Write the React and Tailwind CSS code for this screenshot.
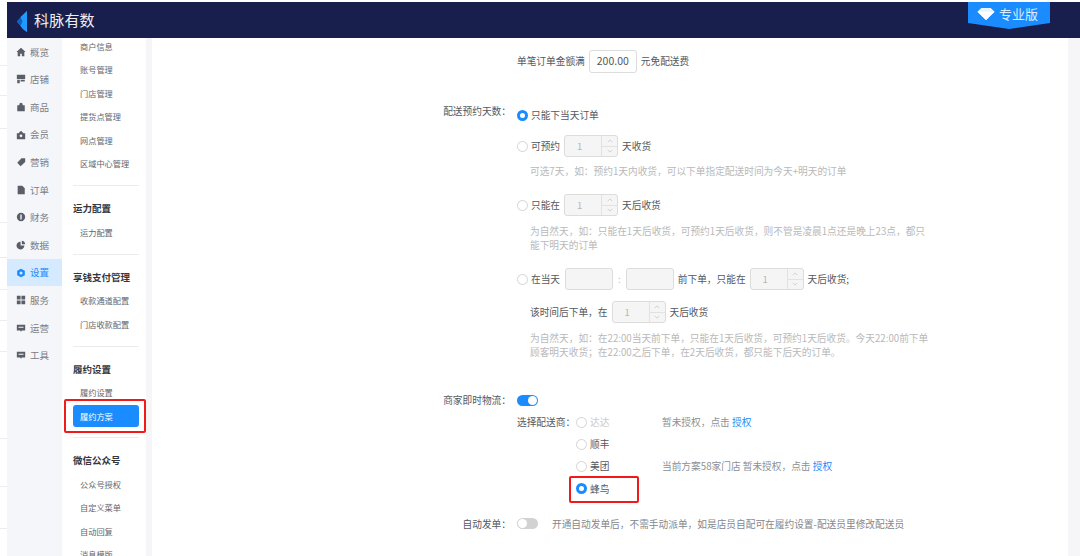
const CJK = "font-['Noto_Sans_CJK_SC','Noto_Sans',sans-serif]"

const menu = [
  ['概览', 'home'], ['店铺', 'store'], ['商品', 'bag'], ['会员', 'crown'], ['营销', 'tag'], ['订单', 'doc'],
  ['财务', 'coin'], ['数据', 'pie'], ['设置', 'gear'], ['服务', 'grid'], ['运营', 'msg'], ['工具', 'msg'],
]

function MenuIcon({ name }) {
  const paths = {
    home: 'M6 1 L11.5 6 H10 V11 H7 V8 H5 V11 H2 V6 H.5 Z',
    store: 'M1 1 H11 V6 H1 Z M1.5 7 H4.5 V11 H1.5 Z M5.5 7 H10.5 V9 H5.5 Z',
    bag: 'M4 4 V3 A2 2 0 0 1 8 3 V4 H10.5 V11 H1.5 V4 Z',
    crown: 'M1 4 H3 L6 1 L9 4 H11 V11 H1 Z',
    tag: 'M6.5 1.5 H11 V6 L5.5 11 L1.5 7 Z',
    doc: 'M2 1 H7.5 L10.5 4 V11 H2 Z',
    coin: 'M6 1 A5 5 0 1 1 6 11 A5 5 0 1 1 6 1 Z',
    pie: 'M5.5 2 V6.5 H10 A4.7 4.7 0 1 1 5.5 2 Z M7 1 A4.5 4.5 0 0 1 11 5 H7 Z',
    gear: 'M6 .8 L10.6 3.4 V8.6 L6 11.2 L1.4 8.6 V3.4 Z',
    grid: 'M1 1 H5.5 V5.5 H1 Z M6.5 1 H11 V5.5 H6.5 Z M1 6.5 H5.5 V11 H1 Z M6.5 6.5 H11 V11 H6.5 Z',
    msg: 'M1 2 H11 V9 H7 L6 10.5 L5 9 H1 Z',
  }
  return (
    <svg viewBox="0 0 12 12" className="w-[10px] h-[10px] shrink-0" fill="currentColor">
      <path d={paths[name]} />
      {name === 'gear' && <circle cx="6" cy="6" r="1.8" fill="#d5e9ff" />}
      {name === 'coin' && <rect x="5.2" y="3" width="1.6" height="6" fill="#f5f6fa" />}
      {name === 'msg' && <rect x="3" y="4.5" width="6" height="1.2" fill="#f5f6fa" />}
      {name === 'crown' && <circle cx="6" cy="7" r="1.6" fill="#f5f6fa" />}
    </svg>
  )
}

function SubItem({ children }) {
  return <div className="h-[23.5px] flex items-center pl-[7px] text-[8.2px] text-[#62656b]">{children}</div>
}

function SubTitle({ children }) {
  return <div className="h-[24px] flex items-center text-[9.5px] font-bold text-[#33363c]">{children}</div>
}

function Divider() {
  return <div className="border-t border-[#ececec] mt-[10px] mb-[10px]" />
}

function Radio({ checked }) {
  if (checked) return <span className="w-[11px] h-[11px] rounded-full border-[3px] border-[#1a8cff] bg-white shrink-0" />
  return <span className="w-[11px] h-[11px] rounded-full border border-[#d4d4d4] bg-white shrink-0" />
}

function Stepper() {
  return (
    <div className="w-[54px] h-[22px] flex border border-[#dcdcdc] rounded-[3px] bg-[#f5f5f5] text-[9.5px] text-[#b5b5b5]">
      <div className="flex-1 flex items-center pl-[12px]">1</div>
      <div className="w-[16px] border-l border-[#e2e2e2] flex flex-col text-[#c4c4c4]">
        <div className="flex-1 flex items-center justify-center border-b border-[#e2e2e2]">
          <svg viewBox="0 0 8 5" className="w-[6px] h-[4px]" fill="none" stroke="currentColor"><path d="M1 4 L4 1 L7 4" /></svg>
        </div>
        <div className="flex-1 flex items-center justify-center">
          <svg viewBox="0 0 8 5" className="w-[6px] h-[4px]" fill="none" stroke="currentColor"><path d="M1 1 L4 4 L7 1" /></svg>
        </div>
      </div>
    </div>
  )
}

function Blank() {
  return <div className="w-[48px] h-[22px] border border-[#dcdcdc] rounded-[3px] bg-[#f5f5f5]" />
}

function Help({ children, className = '' }) {
  return <p className={`pl-[13px] w-[415px] text-[9.7px] leading-[14px] text-[#b9b9b9] ${className}`}>{children}</p>
}

export default function App() {
  return (
    <div className={`${CJK} w-[1080px] h-[556px] overflow-hidden flex bg-white`}>
      {/* page behind the window */}
      <div className="w-[7px] pt-[37px] flex flex-col shrink-0">
        {[29, 30, 33, 94, 35, 32, 31, 31, 87, 48, 42].map((h, i) => (
          <div key={i} style={{ height: h }} className="border-b border-[#ececec]" />
        ))}
      </div>

      <div className="flex-1 flex flex-col pt-[2px] min-w-0">
        {/* header */}
        <header className="h-[36px] bg-[#181f4d] flex justify-between shrink-0 pl-[10px] pr-[30px]">
          <div className="flex items-center gap-[7px]">
            <svg viewBox="0 0 10 21" className="w-[10px] h-[21px] mt-[3px]">
              <path d="M10 0 V21 L6 18 L0 10.5 Z" fill="#1a8cff" />
              <path d="M10 0 L3.5 6 L5.5 10.5 L3.5 15 L6 18 L10 21 Z" fill="#1f9bff" />
              <path d="M0 10.5 L3.5 6 L5.5 10.5 L3.5 15 Z" fill="#0f62c4" />
            </svg>
            <span className="text-[15px] tracking-[0.2px] text-[#eef0f6] mt-[1px]">科脉有数</span>
          </div>
          <div className="w-[82px] h-[27px] bg-[#1a8cff] flex items-start pl-[9px] gap-[4px] pt-[3px] [clip-path:polygon(0_0,100%_0,100%_78%,50%_100%,0_78%)]">
            <svg viewBox="0 0 20 14" className="w-[18px] h-[12px] mt-[3px]">
              <path d="M4.5 0 H15.5 L20 4.5 L10 14 L0 4.5 Z" fill="#e8f4ff" />
              <path d="M0 4.5 H20 L10 14 Z" fill="#ffffff" />
            </svg>
            <span className="text-[13px] leading-[18px] text-[#dcecff]">专业版</span>
          </div>
        </header>

        <div className="flex-1 flex min-h-0">
          {/* main menu */}
          <nav className="w-[55px] bg-[#f5f6fa] shrink-0">
            {menu.map(([label, icon]) => {
              const active = label === '设置'
              return (
                <div
                  key={label}
                  className={`h-[27.6px] flex items-center gap-[4px] pl-[9px] text-[9.5px] ${active ? 'bg-[#d5e9ff] text-[#1a8cff]' : 'text-[#7a7d84]'}`}
                >
                  <span className={active ? 'text-[#1a8cff]' : 'text-[#5b5e66]'}><MenuIcon name={icon} /></span>
                  {label}
                </div>
              )
            })}
          </nav>

          {/* sub menu */}
          <aside className="w-[84px] shrink-0 bg-white overflow-hidden">
            <div className="pl-[11px] pr-[7px] -mt-[3.75px]">
              <SubItem>商户信息</SubItem>
              <SubItem>账号管理</SubItem>
              <SubItem>门店管理</SubItem>
              <SubItem>提货点管理</SubItem>
              <SubItem>网点管理</SubItem>
              <SubItem>区域中心管理</SubItem>
              <Divider />
              <SubTitle>运力配置</SubTitle>
              <SubItem>运力配置</SubItem>
              <Divider />
              <SubTitle>享钱支付管理</SubTitle>
              <SubItem>收款通道配置</SubItem>
              <SubItem>门店收款配置</SubItem>
              <Divider />
              <SubTitle>履约设置</SubTitle>
              <SubItem>履约设置</SubItem>
              <div className="relative h-[22px] mt-[1px] mb-[2px] bg-[#1a8cff] rounded-[3px] flex items-center pl-[7px] text-[8.2px] text-white">
                履约方案
                <span className="absolute -left-[9px] -right-[7px] -inset-y-[6px] border-2 border-[#f01a1a] rounded-[2px]" />
              </div>
              <Divider />
              <SubTitle>微信公众号</SubTitle>
              <SubItem>公众号授权</SubItem>
              <SubItem>自定义菜单</SubItem>
              <SubItem>自动回复</SubItem>
              <SubItem>消息模版</SubItem>
            </div>
          </aside>

          {/* content */}
          <div className="flex-1 flex bg-[#f6f6f8] pl-[6px] pr-[12px] min-w-0">
            <main className="flex-1 bg-white text-[9.7px] text-[#55585d] pt-[11px]">
              <div className="flex items-center gap-[4px] pl-[365px] h-[24px]">
                单笔订单金额满
                <span className="w-[48px] h-[23px] border border-[#dcdcdc] rounded-[3px] flex items-center justify-center text-[10.5px] text-[#55585c]">200.00</span>
                元免配送费
              </div>

              <div className="flex mt-[33px]">
                <div className="w-[359px] text-right leading-[14px] -mt-[2px]">配送预约天数：</div>
                <div className="ml-[6px] flex flex-col">
                  <div className="flex items-center gap-[4px] h-[16px] mt-[1px]">
                    <Radio checked /><span className="-ml-[1px]">只能下当天订单</span>
                  </div>
                  <div className="flex items-center gap-[4px] mt-[12px]">
                    <Radio /><span className="-ml-[1px]">可预约</span><Stepper />天收货
                  </div>
                  <Help className="mt-[7px]">可选7天，如：预约1天内收货，可以下单指定配送时间为今天+明天的订单</Help>
                  <div className="flex items-center gap-[4px] mt-[16px]">
                    <Radio /><span className="-ml-[1px]">只能在</span><Stepper />天后收货
                  </div>
                  <Help className="mt-[8px]">为自然天，如：只能在1天后收货，可预约1天后收货，则不管是凌晨1点还是晚上23点，都只能下明天的订单</Help>
                  <div className="flex items-center gap-[4px] mt-[16px]">
                    <Radio /><span className="-ml-[1px]">在当天</span>
                    <span className="ml-[1px]"><Blank /></span>
                    <span className="mx-[1px] text-[#b5b5b5]">:</span>
                    <Blank />
                    前下单，只能在<Stepper />天后收货;
                  </div>
                  <div className="flex items-center gap-[4px] mt-[11px] pl-[13px]">
                    该时间后下单，在<Stepper />天后收货
                  </div>
                  <Help className="mt-[8px]">为自然天，如：在22:00当天前下单，只能在1天后收货，可预约1天后收货。今天22:00前下单顾客明天收货；在22:00之后下单，在2天后收货，都只能下后天的订单。</Help>
                </div>
              </div>

              <div className="flex items-center mt-[34px] h-[14px]">
                <div className="w-[359px] text-right">商家即时物流：</div>
                <div className="ml-[6px] w-[21px] h-[11px] rounded-full bg-[#1a8cff] flex justify-end items-center pr-[1px]">
                  <span className="w-[9px] h-[9px] rounded-full bg-white" />
                </div>
              </div>

              <div className="flex mt-[7px] pl-[365px]">
                <div className="w-[59px] leading-[16px] shrink-0">选择配送商：</div>
                <div className="flex flex-col gap-[6.3px]">
                  <div className="flex items-center h-[16px]">
                    <Radio /><span className="ml-[3px] w-[72px] text-[#c8c8c8]">达达</span>
                    <span className="text-[#8d8f94]">暂未授权，点击 <span className="text-[#1a8cff]">授权</span></span>
                  </div>
                  <div className="flex items-center h-[16px]">
                    <Radio /><span className="ml-[3px]">顺丰</span>
                  </div>
                  <div className="flex items-center h-[16px]">
                    <Radio /><span className="ml-[3px] w-[72px]">美团</span>
                    <span className="text-[#8d8f94]">当前方案58家门店 暂未授权，点击 <span className="text-[#1a8cff]">授权</span></span>
                  </div>
                  <div className="relative flex items-center h-[16px]">
                    <Radio checked /><span className="ml-[3px]">蜂鸟</span>
                    <span className="absolute -left-[7px] -top-[5px] w-[70px] h-[27px] border-2 border-[#f01a1a] rounded-[2px]" />
                  </div>
                </div>
              </div>

              <div className="flex items-center mt-[20px] h-[14px]">
                <div className="w-[359px] text-right">自动发单：</div>
                <div className="ml-[6px] w-[21px] h-[11px] rounded-full bg-[#d2d2d2] flex items-center pl-[1px]">
                  <span className="w-[9px] h-[9px] rounded-full bg-white" />
                </div>
                <span className="ml-[14px] text-[#85878c]">开通自动发单后，不需手动派单，如是店员自配可在履约设置-配送员里修改配送员</span>
              </div>
            </main>
          </div>
        </div>
      </div>
    </div>
  )
}
